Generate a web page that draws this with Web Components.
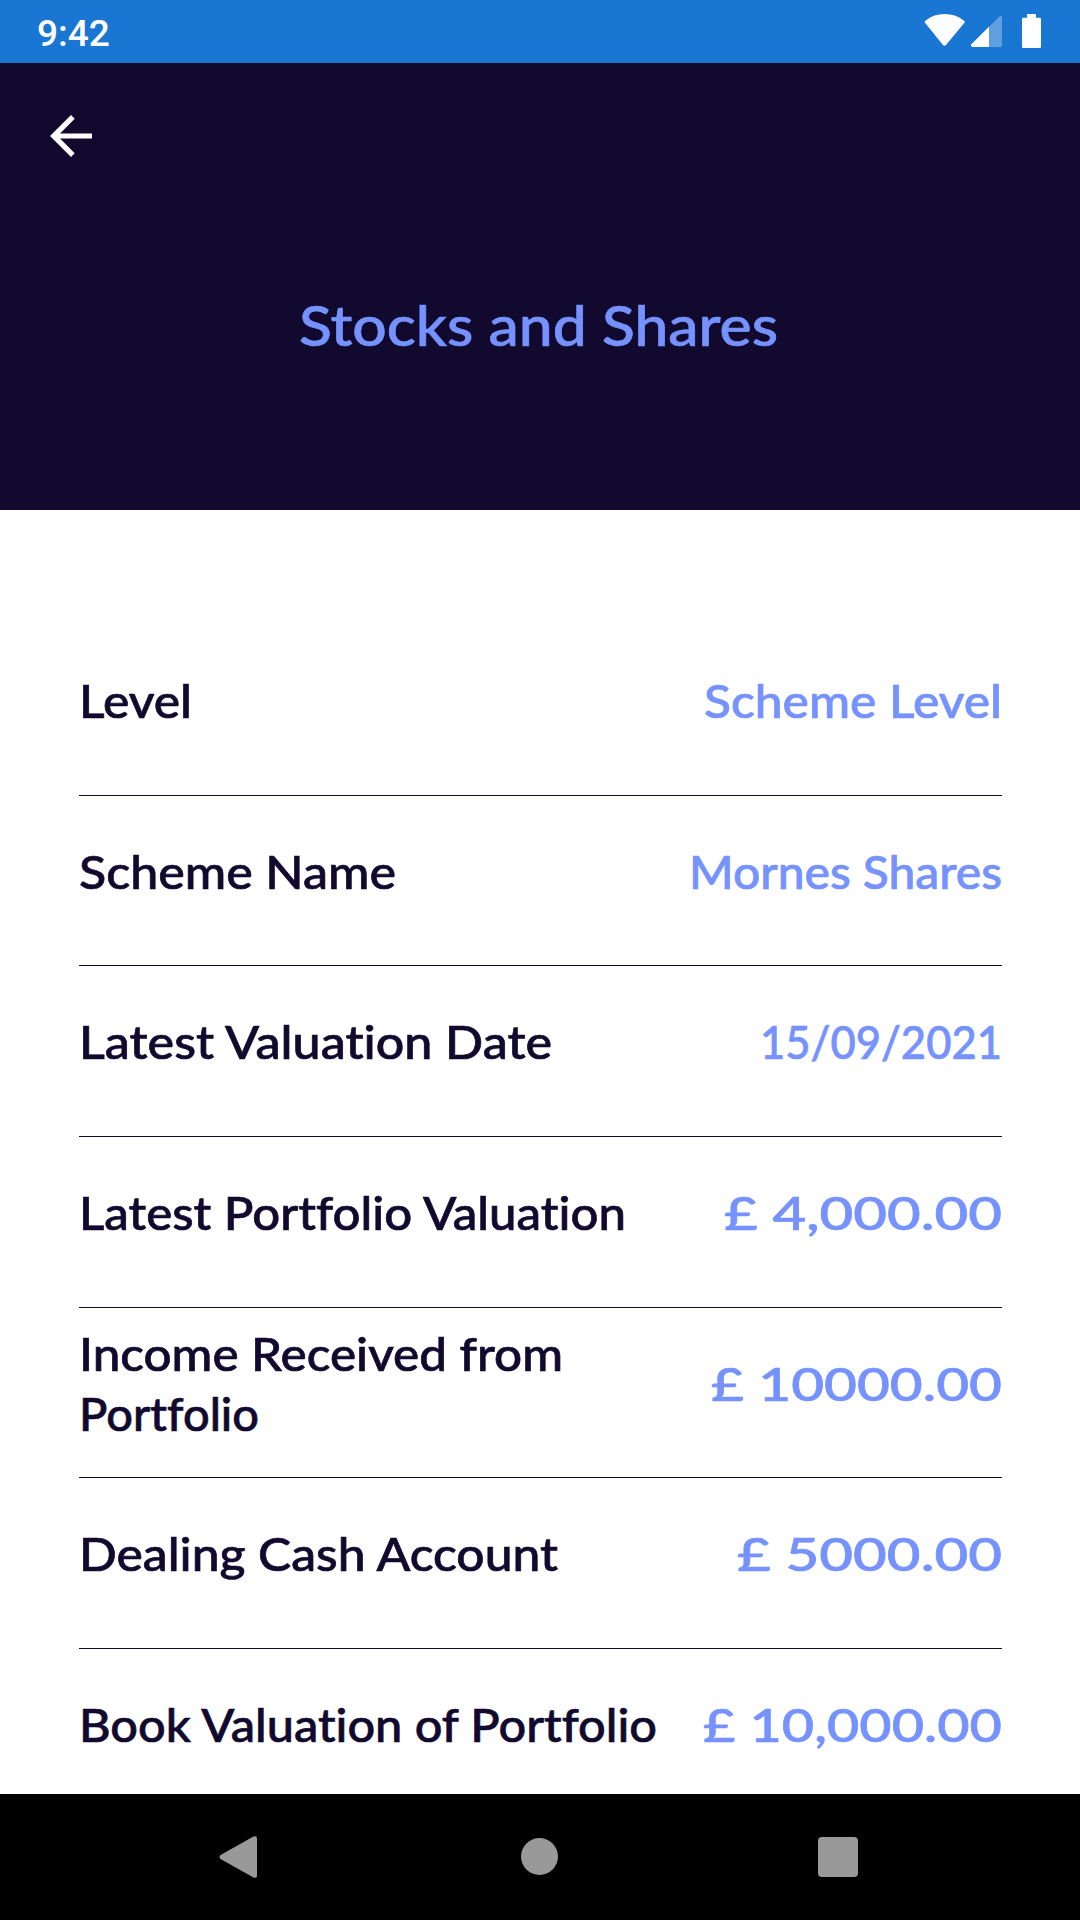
<!DOCTYPE html>
<html lang="en">
<head>
<meta charset="utf-8">
<title>Stocks and Shares</title>
<style>
  body {
    margin: 0;
    background: #fff;
    font-family: Lato, "Open Sans", sans-serif;
  }
</style>
</head>
<body>
<phone-screen>
  <status-bar slot="top">9:42</status-bar>
  <screen-header slot="top"><fit-text width="479">Stocks and Shares</fit-text></screen-header>

  <detail-row>
    <fit-text slot="label" width="113">Level</fit-text>
    <fit-text width="298">Scheme Level</fit-text>
  </detail-row>
  <detail-row>
    <fit-text slot="label" width="317">Scheme Name</fit-text>
    <fit-text width="313">Mornes Shares</fit-text>
  </detail-row>
  <detail-row>
    <fit-text slot="label" width="473">Latest Valuation Date</fit-text>
    <fit-text width="242">15/09/2021</fit-text>
  </detail-row>
  <detail-row>
    <fit-text slot="label" width="547">Latest Portfolio Valuation</fit-text>
    <fit-text width="278">£ 4,000.00</fit-text>
  </detail-row>
  <detail-row>
    <fit-text slot="label" width="484">Income Received from</fit-text>
    <fit-text slot="label" width="180">Portfolio</fit-text>
    <fit-text width="291">£ 10000.00</fit-text>
  </detail-row>
  <detail-row>
    <fit-text slot="label" width="479">Dealing Cash Account</fit-text>
    <fit-text width="265">£ 5000.00</fit-text>
  </detail-row>
  <detail-row>
    <fit-text slot="label" width="578">Book Valuation of Portfolio</fit-text>
    <fit-text width="299">£ 10,000.00</fit-text>
  </detail-row>

  <nav-bar slot="bottom"></nav-bar>
</phone-screen>

<script>
const define = (name, html, setup) => {
  const template = document.createElement("template");
  template.innerHTML = html;

  customElements.define(name, class extends HTMLElement {
    constructor() {
      super();
      this.attachShadow({ mode: "open" });
      this.shadowRoot.appendChild(template.content.cloneNode(true));
    }

    connectedCallback() {
      if (setup) {
        setup(this);
      }
    }
  });
};

define("phone-screen", `\
<style>
:host {
  display: flex;
  flex-direction: column;
  width: 1080px;
  height: 1920px;
  overflow: hidden;
}
main {
  flex: 1;
  min-height: 0;
  overflow: hidden;
  box-sizing: border-box;
  padding: 115.05px 78px 0 79px;
}
</style>
<slot name="top"></slot>
<main><slot></slot></main>
<slot name="bottom"></slot>
`);

define("status-bar", `\
<style>
:host {
  display: flex;
  flex: none;
  justify-content: space-between;
  box-sizing: border-box;
  height: 63px;
  padding: 0 39px 0 37px;
  background: #1976d2;
  color: #fff;
  font: 500 37px/67px Roboto, sans-serif;
}
svg {
  display: block;
}
</style>
<span><slot></slot></span>
<svg width="117" height="63" viewBox="924 0 117 63" fill="#fff">
  <path d="M925.6 23.6Q923.6 22 925.8 20.4Q934 14 944.7 14T963.6 20.4Q965.8 22 963.8 23.6L946 45Q944.5 46.6 943 45Z"/>
  <path d="M972 47Q970.2 46 971.4 44.3L999.6 16.3Q1001.8 15 1002 17.5V45.5Q1002 47 1000.5 47Z" opacity=".3"/>
  <path d="M972 47Q970.2 46 971.4 44.3L989 26.8V47Z"/>
  <rect x="1027" y="14" width="9" height="6"/>
  <rect x="1022" y="17.7" width="19" height="30.3" rx="1.3"/>
</svg>
`);

define("screen-header", `\
<style>
:host {
  display: flex;
  flex: none;
  flex-direction: column;
  box-sizing: border-box;
  height: 447px;
  padding: 41px 39px 0;
  background: #110a2e;
  color: #7592ff;
  font-size: 56.5px;
  line-height: 80px;
}
h1 {
  display: flex;
  justify-content: center;
  margin: 116px 0 0;
  padding-right: 3px;
  font: inherit;
}
</style>
<svg width="64" height="64" viewBox="0 0 24.4 24.4" fill="#fff">
  <path d="M20.2 11.2H8.03l5.59-5.59L12.2 4.2l-8 8 8 8 1.41-1.41L8.03 13.2H20.2z"/>
</svg>
<h1><slot></slot></h1>
`);

define("detail-row", `\
<style>
:host {
  display: flex;
  align-items: center;
  justify-content: space-between;
  box-sizing: border-box;
  height: 170.7px;
  border-bottom: 1px solid #110a2e;
  padding-bottom: 20px;
  font-size: 47px;
  line-height: 60px;
}
.label {
  color: #110a2e;
}
.value {
  color: #7592ff;
}
</style>
<div class="label"><slot name="label"></slot></div>
<div class="value"><slot></slot></div>
`);

define("nav-bar", `\
<style>
:host {
  display: flex;
  flex: none;
  align-items: center;
  justify-content: space-between;
  box-sizing: border-box;
  height: 126px;
  padding: 0 222px 0 219px;
  background: #000;
}
svg {
  display: block;
  fill: #999;
}
</style>
<svg width="38" height="42"><path d="M1.5 19 34.5.6Q38-.8 38 2.5v37Q38 42.8 34.5 41.4L1.5 23Q-.5 21 1.5 19Z"/></svg>
<svg width="41" height="38"><circle cx="22.5" cy="18.5" r="18.5"/></svg>
<svg width="40" height="40"><rect width="40" height="40" rx="4"/></svg>
`);

// One line of text, stretched to the number of pixels in its width attribute.
define("fit-text", `\
<style>
:host {
  display: block;
  white-space: nowrap;
  font-weight: 500;
  font-variant-ligatures: none;
  -webkit-text-stroke: 0.7px currentColor;
}
span {
  display: inline-block;
  transform-origin: left;
}
</style>
<span><slot></slot></span>
`, (el) => {
  const span = el.shadowRoot.querySelector("span");
  const width = Number(el.getAttribute("width"));
  const natural = span.getBoundingClientRect().width;
  el.style.width = width + "px";
  span.style.transform = "scaleX(" + width / natural + ")";
});
</script>
</body>
</html>
